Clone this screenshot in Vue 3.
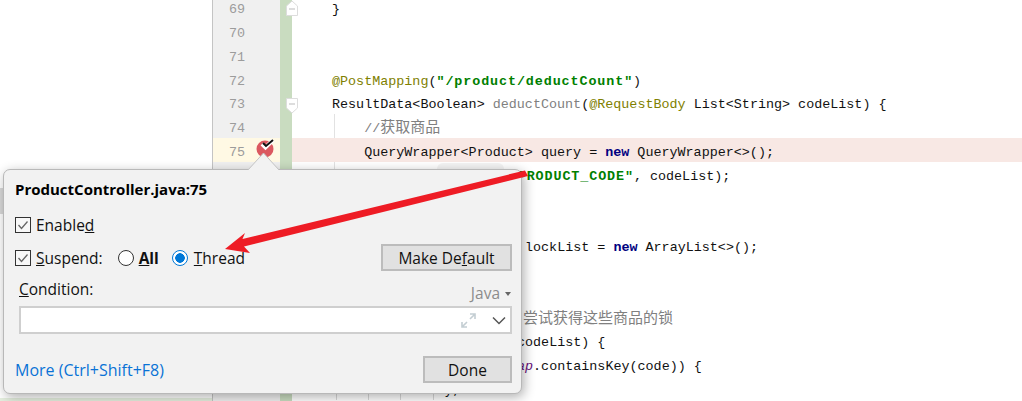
<script setup>
const numbers = Array.from({ length: 17 }, (_, i) => 69 + i)
const lines = [
  { n: 69, parts: [['}', '']] },
  { n: 70, parts: [] },
  { n: 71, parts: [] },
  { n: 72, parts: [['@PostMapping', 'ann'], ['(', ''], ['"/product/deductCount"', 'str'], [')', '']] },
  { n: 73, parts: [['ResultData<Boolean> ', ''], ['deductCount', 'gray'], ['(', ''], ['@RequestBody', 'ann'], [' List<String> codeList) {', '']] },
  { n: 74, g: 1, parts: [['    //', 'gray'], ['获取商品', 'gray zh']] },
  { n: 75, hit: true, parts: [['    QueryWrapper<Product> query = ', ''], ['new', 'kw'], [' QueryWrapper<>();', '']] },
  { n: 76, g: 1, parts: [['    query.lambda().in(', ''], ['"PRODUCT_CODE"', 'str'], [', codeList);', '']] },
  { n: 77, g: 1, parts: [] },
  { n: 78, g: 1, parts: [] },
  { n: 79, g: 1, parts: [['lockList = ', 'past-a'], ['new', 'kw'], [' ArrayList<>();', '']] },
  { n: 80, g: 1, parts: [] },
  { n: 81, g: 1, parts: [] },
  { n: 82, g: 1, parts: [['尝试获得这些商品的锁', 'gray zh past-b']] },
  { n: 83, g: 1, parts: [['codeList) {', 'past-c']] },
  { n: 84, g: 2, parts: [['ap', 'field past-c'], ['.containsKey(code)) {', '']] },
  { n: 85, g: 4, parts: [['            key,', '']] }
]
</script>

<template>
  <div class="page">
    <div class="left">
      <div class="band"></div>
      <div class="foot"></div>
    </div>
    <div class="gutter">
      <div v-for="n in numbers" :key="n" class="num" :class="{ cur: n === 75 }">{{ n <= 75 ? n : '' }}</div>
    </div>
    <div class="strip"></div>
    <div class="code">
      <div v-for="l in lines" :key="l.n" class="row" :class="[{ hit: l.hit }, l.g ? 'g' + l.g : '']"><span v-for="(p, i) in l.parts" :key="i" :class="p[1]">{{ p[0] }}</span></div>
    </div>

    <svg class="fold fold-a" width="14" height="17" viewBox="0 0 14 17">
      <path d="M1.500 15.500V6L7 1l5.500 5v9.500z" fill="#fff" stroke="#ddd" />
      <path d="M4 9h6" stroke="#bbb" />
    </svg>
    <svg class="fold fold-b" width="14" height="17" viewBox="0 0 14 17">
      <path d="M1.500 1.500h11V11L7 16l-5.500-5z" fill="#fff" stroke="#ddd" />
      <path d="M4 7h6" stroke="#bbb" />
    </svg>

    <svg class="bp" width="24" height="22" viewBox="0 0 24 22">
      <circle cx="10" cy="12" r="8.500" fill="#db5860" />
      <path d="M7 7l3.500 3.500L18 3" fill="none" stroke="#fff" stroke-width="4" />
      <path d="M8 6l3 3 7-6" fill="none" stroke="#111" stroke-width="2" />
    </svg>

    <div class="bump"></div>

    <div class="popup">
      <svg class="caret" width="34" height="20" viewBox="0 0 34 20">
        <path d="M1 19L16.500 2 32 19z" fill="#f2f2f2" />
        <path d="M1 19L16.500 2 32 19" fill="none" stroke="#c4c4c4" />
      </svg>
      <div class="title">ProductController.java:75</div>
      <label class="line enabled">
        <span class="check"><svg width="14" height="14" viewBox="0 0 14 14"><path d="M2.500 7l3 3.500 6-7" fill="none" stroke="#666" stroke-width="1.300" /></svg></span>
        <span>Enable<u>d</u></span>
      </label>
      <div class="line suspend">
        <span class="check"><svg width="14" height="14" viewBox="0 0 14 14"><path d="M2.500 7l3 3.500 6-7" fill="none" stroke="#666" stroke-width="1.300" /></svg></span>
        <span><u>S</u>uspend:</span>
        <span class="radio first"></span>
        <b><u>A</u>ll</b>
        <span class="radio on"></span>
        <span><u>T</u>hread</span>
        <button class="btn make">Make De<u>f</u>ault</button>
      </div>
      <div class="cond-head">
        <span><u>C</u>ondition:</span>
        <span class="lang">Java<i class="tri"></i></span>
      </div>
      <div class="input">
        <svg width="17" height="17" viewBox="0 0 17 17">
          <path d="M10 2h5v5M15 2l-5 5M2 10v5h5M2 15l5-5" fill="none" stroke="#c4ced3" stroke-width="1.600" />
        </svg>
        <svg class="chev" width="14" height="9" viewBox="0 0 14 9">
          <path d="M1 1.500l6 6 6-6" fill="none" stroke="#555" stroke-width="1.500" />
        </svg>
      </div>
      <div class="footer">
        <a class="more">More (Ctrl+Shift+F8)</a>
        <button class="btn done">Done</button>
      </div>
    </div>

    <svg class="arrow" width="320" height="100" viewBox="0 0 320 100">
      <path d="M305 0.500L308 6 24 76.500 30 83 5 79 25 63 22.500 69z" fill="#ee1c25" />
    </svg>
  </div>
</template>

<style scoped>
.page {
  position: relative;
  display: flex;
  width: 1022px;
  height: 401px;
  overflow: hidden;
  background: #fff;
}
.left {
  width: 212px;
  flex: none;
  display: flex;
  flex-direction: column;
  justify-content: space-between;
}
.band {
  margin-top: 188px;
  width: 6px;
  height: 26px;
  background: #d9d9d9;
}
.foot {
  height: 3px;
  background: #e5efdf;
}
.gutter {
  width: 68px;
  flex: none;
  box-sizing: border-box;
  border-left: 1px solid #c4c4c4;
  background: #f0f0f0;
  font: 13.4px/19.800px "Liberation Mono", monospace;
  color: #9c9c9c;
}
.num {
  height: 23.800px;
  box-sizing: border-box;
  padding: 5px 0 0 16px;
}
.num:first-child {
  margin-top: -4.800px;
}
.cur {
  background: #fff9e4;
}
.strip {
  width: 12px;
  flex: none;
  background: #c9dcc0;
}
.code {
  flex: 1;
  font: 13.4px/19.800px "Liberation Mono", "Noto Sans CJK SC", monospace;
  color: #111;
}
.row {
  height: 23.800px;
  box-sizing: border-box;
  padding: 5px 0 0 40px;
  white-space: pre;
}
.row:first-child {
  margin-top: -4.800px;
}
.hit {
  background: #f8e8e4;
}
.g1,
.g2,
.g4 {
  background-image: linear-gradient(#e2e2e2, #e2e2e2);
  background-size: 1px 100%;
  background-repeat: no-repeat;
  background-position: 42px 0;
}
.g2 {
  background-image: linear-gradient(#e2e2e2, #e2e2e2), linear-gradient(#e2e2e2, #e2e2e2);
  background-size: 1px 100%, 1px 100%;
  background-position: 42px 0, 74px 0;
}
.g4 {
  background-image: linear-gradient(#d8d8d8, #d8d8d8), linear-gradient(#d8d8d8, #d8d8d8), linear-gradient(#d8d8d8, #d8d8d8), linear-gradient(#d8d8d8, #d8d8d8);
  background-size: 1px 100%, 1px 100%, 1px 100%, 1px 100%;
  background-position: 44px 0, 76px 0, 108px 0, 141px 0;
}
.ann { color: #808000; }
.str { color: #008000; font-weight: 700; letter-spacing: 0.9px; }
.gray { color: #808080; }
.zh { font-size: 15px; }
.past-a { margin-left: 193px; }
.past-b { margin-left: 191px; }
.past-c { margin-left: 185px; }
.kw { color: #000080; font-weight: 700; }
.field { color: #660e7a; font-style: italic; }

.fold {
  position: absolute;
  left: 285px;
}
.fold-a { top: 0; }
.fold-b { top: 97px; }
.bp {
  position: absolute;
  left: 255px;
  top: 137px;
}
.bump {
  position: absolute;
  left: 437px;
  top: 163px;
  width: 67px;
  height: 12px;
  border-radius: 6px 6px 0 0;
  background: #f4f4f4;
}
.popup {
  position: absolute;
  left: 3px;
  top: 169px;
  width: 519px;
  height: 225px;
  box-sizing: border-box;
  padding: 9px 9px 0 11px;
  display: flex;
  flex-direction: column;
  border: 1px solid #b8b8b8;
  border-radius: 7px;
  background: #f2f2f2;
  box-shadow: 2px 3px 12px rgba(0, 0, 0, 0.32);
  font: 15.500px/20px "Open Sans", "Noto Sans", sans-serif;
  color: #111;
}
.caret {
  position: absolute;
  left: 243px;
  top: -19px;
}
.title {
  height: 20px;
  font-weight: 700;
  font-size: 15px;
  color: #000;
}
.line {
  display: flex;
  align-items: center;
}
.enabled {
  margin-top: 16px;
  height: 20px;
}
.suspend {
  margin-top: 9px;
  height: 27px;
}
.check {
  width: 16px;
  height: 16px;
  box-sizing: border-box;
  margin-right: 5px;
  display: flex;
  align-items: center;
  justify-content: center;
  border: 1px solid #333;
  background: #f8f8f8;
}
.radio {
  width: 16px;
  height: 16px;
  box-sizing: border-box;
  margin: 0 5px 0 15px;
  border: 1.500px solid #333;
  border-radius: 50%;
  background: #fff;
}
.radio.on {
  margin: 0 6px 0 13px;
  border-color: #0078d7;
  background: radial-gradient(circle, #0078d7 0 4.500px, #fff 5px);
}
.btn {
  box-sizing: border-box;
  padding: 0;
  border: 2px solid #bcbcbc;
  background: #e1e1e1;
  font: inherit;
  color: #111;
}
.make {
  margin-left: auto;
  width: 131px;
  height: 27px;
}
.cond-head {
  margin: 8px 0 7px 4px;
  height: 20px;
  display: flex;
  justify-content: space-between;
}
.lang {
  display: flex;
  align-items: center;
  padding-top: 7px;
  color: #8c8c8c;
}
.tri {
  width: 0;
  height: 0;
  margin: 2px 1px 0 5px;
  border: 3.500px solid transparent;
  border-top: 4px solid #666;
  border-bottom: 0;
}
.input {
  margin-left: 4px;
  height: 28px;
  box-sizing: border-box;
  display: flex;
  align-items: center;
  justify-content: flex-end;
  padding-right: 4px;
  border: 2px solid #cfcfcf;
  background: #fff;
}
.chev {
  margin-left: 15px;
}
.footer {
  margin-top: 22px;
  display: flex;
  align-items: center;
  justify-content: space-between;
}
.more {
  font-size: 16px;
  color: #0a72d6;
}
.done {
  width: 89px;
  height: 27px;
}
.arrow {
  position: absolute;
  left: 220px;
  top: 170px;
}
</style>

<style>
html,
body {
  margin: 0;
  background: #fff;
  overflow: hidden;
}
</style>
